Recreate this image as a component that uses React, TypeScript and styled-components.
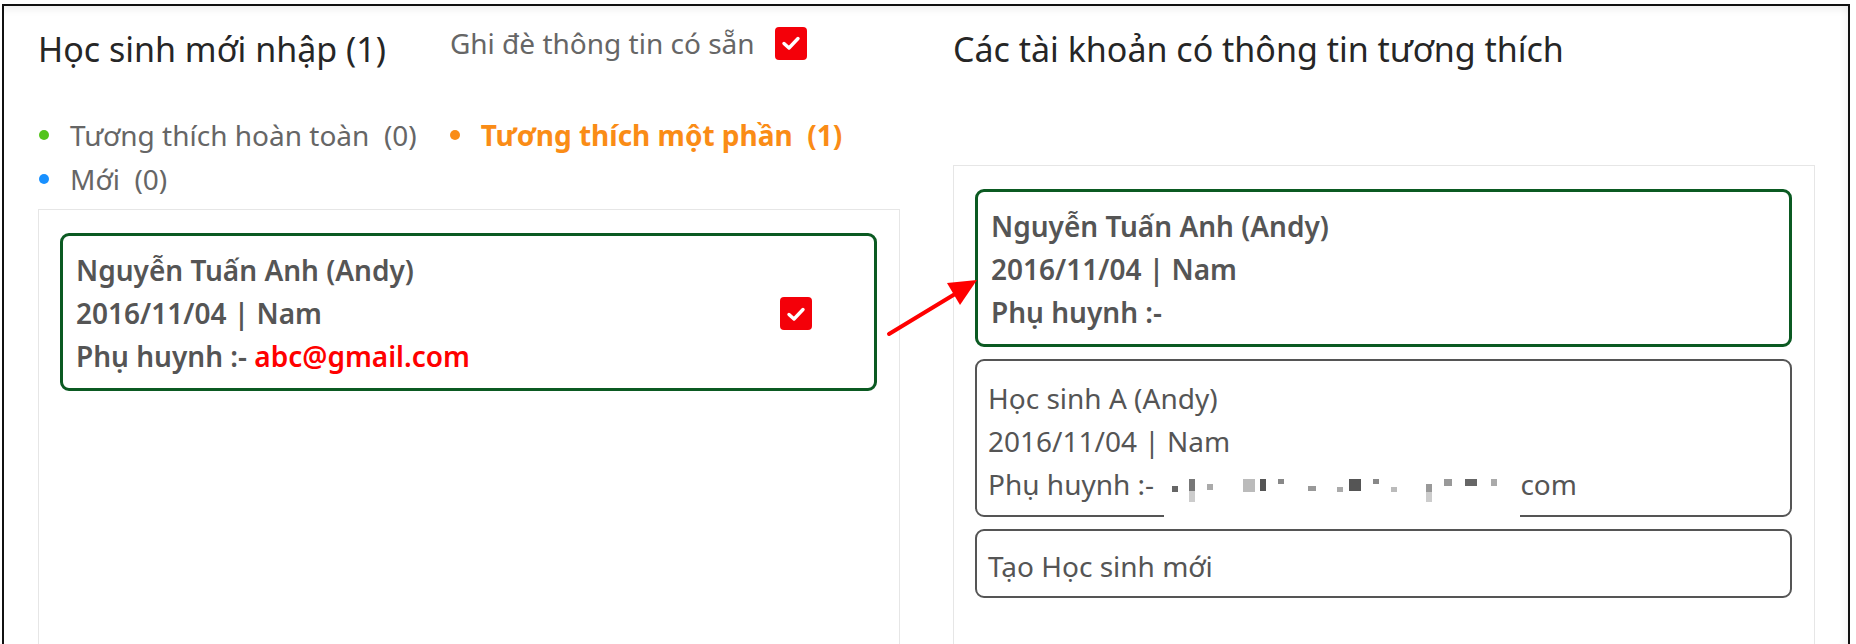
import React from "react";
import styled, { createGlobalStyle } from "styled-components";

const GlobalStyle = createGlobalStyle`
  html, body {
    margin: 0;
    padding: 0;
    background: #fff;
  }
  body {
    font-family: "Noto Sans", "Open Sans", sans-serif;
  }
`;

const Page = styled.div`
  padding: 4px 6px 0 2px;
  height: 644px;
  box-sizing: border-box;
`;

const Frame = styled.div`
  position: relative;
  height: 640px;
  box-sizing: border-box;
  border: 2px solid #111;
  border-bottom: none;
  overflow: hidden;
  box-shadow: inset 0 10px 8px -7px rgba(0, 0, 0, 0.07),
    inset -9px 0 8px -7px rgba(0, 0, 0, 0.06);
`;

const Columns = styled.div`
  display: grid;
  grid-template-columns: 862px 862px;
  column-gap: 53px;
  padding-left: 34px;
`;

const Column = styled.section`
  display: flex;
  flex-direction: column;
`;

const HeaderRow = styled.div<{ $h: number }>`
  display: flex;
  align-items: flex-start;
  height: ${({ $h }) => $h}px;
`;

const Title = styled.h2`
  margin: 20px 0 0;
  font-size: 34px;
  line-height: 46px;
  font-weight: 400;
  color: #262626;
  white-space: nowrap;
`;

const Overwrite = styled.label`
  display: flex;
  align-items: center;
  margin: 19px 0 0 64px;
  font-size: 28px;
  line-height: 36px;
  color: #666;
  gap: 20px;
`;

const CheckBox = styled.span`
  display: inline-flex;
  align-items: center;
  justify-content: center;
  width: 32px;
  height: 33px;
  border-radius: 4px;
  background: #f40009;
  flex: none;
`;

const Legend = styled.div`
  display: flex;
  flex-wrap: wrap;
  width: 880px;
  column-gap: 32px;
`;

const LegendItem = styled.div<{ $dot: string; $active?: boolean }>`
  display: flex;
  align-items: center;
  height: 44px;
  font-size: 28px;
  white-space: pre;
  color: ${({ $active, $dot }) => ($active ? $dot : "#666")};
  font-weight: ${({ $active }) => ($active ? 700 : 400)};

  &::before {
    content: "";
    width: 10px;
    height: 10px;
    border-radius: 50%;
    background: ${({ $dot }) => $dot};
    margin: 0 21px 0 1px;
  }
`;

const ListBox = styled.div<{ $top: number }>`
  margin-top: ${({ $top }) => $top}px;
  border: 1px solid #e6e6e6;
  height: 480px;
  padding: 23px 22px 0 21px;
  display: flex;
  flex-direction: column;
  gap: 12px;
`;

type CardKind = "selected" | "option" | "create";

const cardPadding: Record<CardKind, string> = {
  selected: "13px 62px 10px 13px",
  option: "16px 62px 9px 11px",
  create: "14px 62px 8px 11px",
};

const Card = styled.div<{ $kind: CardKind }>`
  display: flex;
  align-items: center;
  border: ${({ $kind }) => ($kind === "selected" ? "3px solid #0b5a22" : "2px solid #555")};
  border-radius: 9px;
  padding: ${({ $kind }) => cardPadding[$kind]};
`;

const Info = styled.div<{ $bold?: boolean }>`
  flex: 1;
  font-size: 28px;
  line-height: 43px;
  color: #555;
  font-weight: ${({ $bold }) => ($bold ? 600 : 400)};
`;

const Line = styled.div`
  white-space: nowrap;
`;

const Email = styled.span`
  color: #f00;
`;

/* blurred e-mail: white patch that also hides the card's bottom edge */
const Redacted = styled.span`
  position: relative;
  display: inline-block;
  width: 356px;
  height: 1px;
  margin-left: 3px;

  svg {
    position: absolute;
    left: 0;
    top: -30px;
    background: #fff;
  }
`;

const Arrow = styled.svg`
  position: absolute;
  left: 876px;
  top: 264px;
`;

const Check = () => (
  <svg width="20" height="16" viewBox="0 0 20 16">
    <path d="M3 8.5 L8 13 L17 3.5" fill="none" stroke="#fff" strokeWidth="3.4" strokeLinecap="round" strokeLinejoin="round" />
  </svg>
);

const mosaic: [number, number, number, number, string][] = [
  [8, 22, 6, 6, "#666"],
  [25, 15, 6, 12, "#777"],
  [25, 27, 6, 11, "#ccc"],
  [43, 20, 6, 6, "#aaa"],
  [79, 15, 12, 13, "#bbb"],
  [96, 15, 6, 12, "#555"],
  [114, 15, 6, 5, "#888"],
  [144, 22, 8, 5, "#999"],
  [173, 23, 6, 5, "#aaa"],
  [185, 15, 12, 12, "#555"],
  [209, 15, 6, 5, "#888"],
  [227, 23, 6, 5, "#bbb"],
  [262, 20, 6, 8, "#999"],
  [262, 28, 6, 10, "#ccc"],
  [280, 15, 8, 7, "#999"],
  [301, 15, 12, 7, "#666"],
  [327, 15, 6, 7, "#aaa"],
];

const Mosaic = () => (
  <Redacted>
    <svg width="356" height="60" viewBox="0 0 356 60">
      {mosaic.map(([x, y, w, h, c], i) => (
        <rect key={i} x={x} y={y} width={w} height={h} fill={c} />
      ))}
    </svg>
  </Redacted>
);

export default function App() {
  return (
    <Page>
      <GlobalStyle />
      <Frame>
        <Columns>
          <Column>
            <HeaderRow $h={107}>
              <Title>Học sinh mới nhập (1)</Title>
              <Overwrite>
                Ghi đè thông tin có sẵn
                <CheckBox>
                  <Check />
                </CheckBox>
              </Overwrite>
            </HeaderRow>
            <Legend>
              <LegendItem $dot="#52c41a">Tương thích hoàn toàn  (0)</LegendItem>
              <LegendItem $dot="#fa8c16" $active>
                Tương thích một phần  (1)
              </LegendItem>
              <LegendItem $dot="#1890ff">Mới  (0)</LegendItem>
            </Legend>
            <ListBox $top={8}>
              <Card $kind="selected">
                <Info $bold>
                  <Line>Nguyễn Tuấn Anh (Andy)</Line>
                  <Line>2016/11/04 | Nam</Line>
                  <Line>
                    Phụ huynh :- <Email>abc@gmail.com</Email>
                  </Line>
                </Info>
                <CheckBox>
                  <Check />
                </CheckBox>
              </Card>
            </ListBox>
          </Column>
          <Column>
            <HeaderRow $h={159}>
              <Title>Các tài khoản có thông tin tương thích</Title>
            </HeaderRow>
            <ListBox $top={0}>
              <Card $kind="selected">
                <Info $bold>
                  <Line>Nguyễn Tuấn Anh (Andy)</Line>
                  <Line>2016/11/04 | Nam</Line>
                  <Line>Phụ huynh :-</Line>
                </Info>
              </Card>
              <Card $kind="option">
                <Info>
                  <Line>Học sinh A (Andy)</Line>
                  <Line>2016/11/04 | Nam</Line>
                  <Line>
                    Phụ huynh :- <Mosaic />com
                  </Line>
                </Info>
              </Card>
              <Card $kind="create">
                <Info>
                  <Line>Tạo Học sinh mới</Line>
                </Info>
              </Card>
            </ListBox>
          </Column>
        </Columns>
        <Arrow width="110" height="80" viewBox="0 0 110 80">
          <line x1="9" y1="64" x2="80" y2="21" stroke="#f00" strokeWidth="4" strokeLinecap="round" />
          <polygon points="97,10 67,13 80,35" fill="#f00" />
        </Arrow>
      </Frame>
    </Page>
  );
}
